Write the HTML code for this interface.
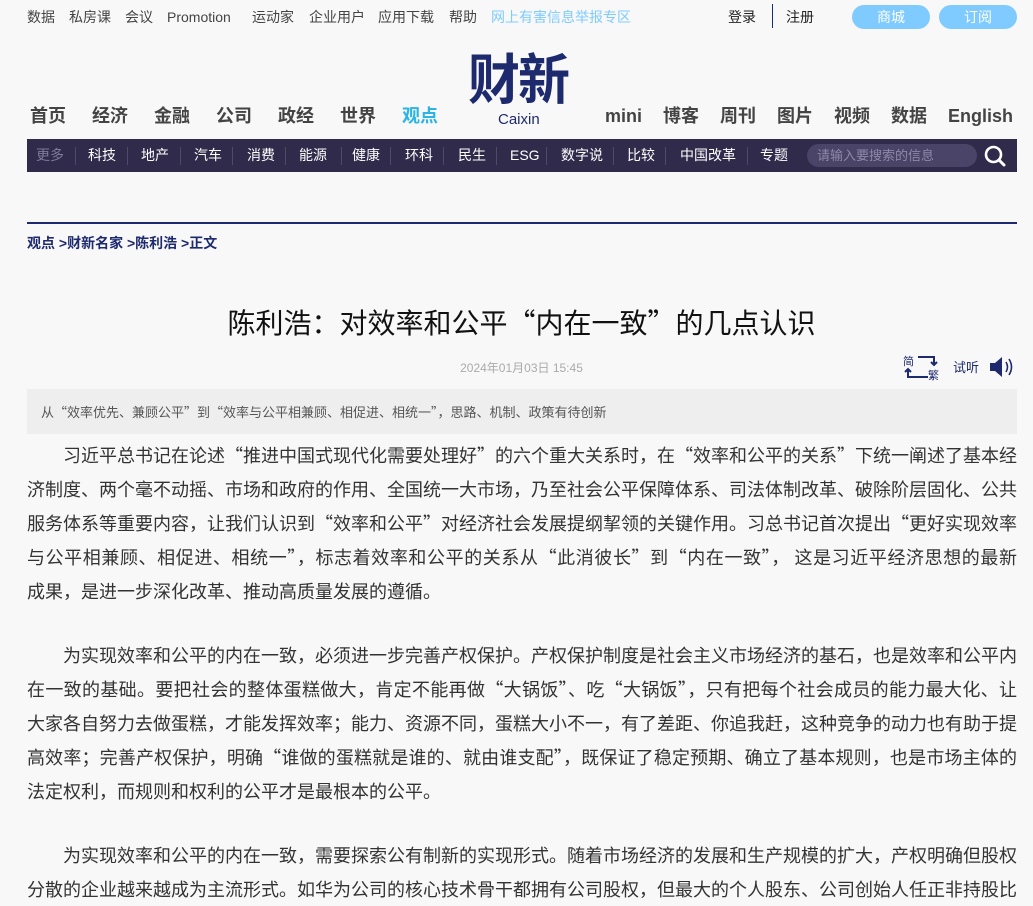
<!DOCTYPE html>
<html><head><meta charset="utf-8"><style>
*{margin:0;padding:0;box-sizing:border-box}
body{width:1033px;height:898px;overflow:hidden;background:#f8f8f8;font-family:"Liberation Sans","Noto Sans CJK SC",sans-serif;color:#333;position:relative}
.a{position:absolute;white-space:nowrap}
.top{top:7px;font-size:14px;color:#444;line-height:20px}
.pill{position:absolute;top:5px;height:24px;width:78px;border-radius:12px;background:#7fcbff;color:#fff;font-size:14px;text-align:center;line-height:24px}
.nav{top:103px;font-size:18px;font-weight:bold;color:#444;line-height:26px}
.bar{position:absolute;left:27px;top:139px;width:990px;height:33px;background:#302b4b}
.bar span{position:absolute;top:0;line-height:33px;font-size:14px;color:#fff}
.sep{position:absolute;top:8px;width:1px;height:18px;background:#4e4a68}
.ln{display:block;text-align:justify;text-align-last:justify;white-space:nowrap}
.ln.l{text-align-last:left}
.p{position:absolute;left:27px;width:990px;font-size:18px;line-height:34px;color:#333;font-family:"Noto Sans CJK SC","Liberation Sans",sans-serif}
</style></head><body>
<div class="a top" style="left:27px">数据</div>
<div class="a top" style="left:69px">私房课</div>
<div class="a top" style="left:125px">会议</div>
<div class="a top" style="left:167px">Promotion</div>
<div class="a top" style="left:252px">运动家</div>
<div class="a top" style="left:309px">企业用户</div>
<div class="a top" style="left:378px">应用下载</div>
<div class="a top" style="left:449px">帮助</div>
<div class="a top" style="left:491px;color:#7fcbff">网上有害信息举报专区</div>
<div class="a top" style="left:728px;color:#222">登录</div>
<div style="position:absolute;left:772px;top:4px;width:1px;height:24px;background:#1e2a6e"></div>
<div class="a top" style="left:786px;color:#222">注册</div>
<div class="pill" style="left:852px">商城</div>
<div class="pill" style="left:939px">订阅</div>

<div class="a" style="left:468px;top:50px;font-size:52px;font-weight:bold;color:#1e2a6e;line-height:62px;letter-spacing:-2px;transform:scaleY(1.05)">财新</div>
<div class="a" style="left:498px;top:110px;font-size:15px;color:#1e2a6e;line-height:20px">Caixin</div>

<div class="a nav" style="left:30px">首页</div>
<div class="a nav" style="left:92px">经济</div>
<div class="a nav" style="left:154px">金融</div>
<div class="a nav" style="left:216px">公司</div>
<div class="a nav" style="left:278px">政经</div>
<div class="a nav" style="left:340px">世界</div>
<div class="a nav" style="left:402px;color:#2bb5e6">观点</div>
<div class="a nav" style="left:605px">mini</div>
<div class="a nav" style="left:663px">博客</div>
<div class="a nav" style="left:720px">周刊</div>
<div class="a nav" style="left:777px">图片</div>
<div class="a nav" style="left:834px">视频</div>
<div class="a nav" style="left:891px">数据</div>
<div class="a nav" style="left:948px">English</div>

<div class="bar">
<span style="left:9px;color:#7e7a98">更多</span><i class="sep" style="left:48px"></i>
<span style="left:61px">科技</span><i class="sep" style="left:100px"></i>
<span style="left:114px">地产</span><i class="sep" style="left:153px"></i>
<span style="left:167px">汽车</span><i class="sep" style="left:205px"></i>
<span style="left:220px">消费</span><i class="sep" style="left:258px"></i>
<span style="left:272px">能源</span><i class="sep" style="left:314px"></i>
<span style="left:325px">健康</span><i class="sep" style="left:363px"></i>
<span style="left:378px">环科</span><i class="sep" style="left:416px"></i>
<span style="left:431px">民生</span><i class="sep" style="left:469px"></i>
<span style="left:483px">ESG</span><i class="sep" style="left:519px"></i>
<span style="left:534px">数字说</span><i class="sep" style="left:586px"></i>
<span style="left:600px">比较</span><i class="sep" style="left:638px"></i>
<span style="left:653px">中国改革</span><i class="sep" style="left:720px"></i>
<span style="left:733px">专题</span>
<div style="position:absolute;left:780px;top:5px;width:170px;height:23px;border-radius:12px;background:#4a4468;color:#8e89a8;font-size:13px;line-height:23px;padding-left:10px">请输入要搜索的信息</div>
<svg style="position:absolute;left:957px;top:6px" width="22" height="22" viewBox="0 0 22 22"><circle cx="9.5" cy="9.5" r="7.5" fill="none" stroke="#fff" stroke-width="2.6"/><path d="M15 15l5 5" stroke="#fff" stroke-width="3" stroke-linecap="round"/></svg>
</div>

<div style="position:absolute;left:27px;top:222px;width:990px;height:2px;background:#1e2a6e"></div>
<div class="a" style="left:27px;top:233px;font-size:14px;font-weight:bold;color:#1e2a6e;line-height:20px">观点 &gt;财新名家 &gt;陈利浩 &gt;正文</div>
<div class="a" style="left:0;width:1043px;text-align:center;top:303px;font-size:28px;color:#111;line-height:38px;font-family:'Noto Sans CJK SC',sans-serif">陈利浩：对效率和公平“内在一致”的几点认识</div>
<div class="a" style="left:0;width:1043px;text-align:center;top:360px;font-size:12px;color:#aaa;line-height:16px">2024年01月03日 15:45</div>
<svg style="position:absolute;left:902px;top:353px" width="42" height="28" viewBox="0 0 42 28"><text x="1" y="12" font-size="11" fill="#1e2a6e" font-family="Noto Sans CJK SC">简</text><text x="26" y="26" font-size="11" fill="#1e2a6e" font-family="Noto Sans CJK SC">繁</text><path d="M16 4h16v8M29 9l3 3 3-3M26 24H6v-8M3 19l3-3 3 3" fill="none" stroke="#1e2a6e" stroke-width="2"/></svg>
<div class="a" style="left:953px;top:359px;font-size:13px;color:#1e2a6e;line-height:18px">试听</div>
<svg style="position:absolute;left:988px;top:356px" width="28" height="22" viewBox="0 0 28 22"><path d="M2 7h5l7-6v20l-7-6H2z" fill="#1e2a6e"/><path d="M18 6q3 5 0 10M21 3q5 8 0 16" fill="none" stroke="#1e2a6e" stroke-width="1.6"/></svg>

<div style="position:absolute;left:27px;top:389px;width:990px;height:45px;background:#eeeeee;font-size:13px;color:#555;line-height:45px;padding-left:14px;font-family:'Noto Sans CJK SC',sans-serif">从“效率优先、兼顾公平”到“效率与公平相兼顾、相促进、相统一”，思路、机制、政策有待创新</div>

<div class="p" style="top:438px">
<span class="ln" style="padding-left:36px">习近平总书记在论述“推进中国式现代化需要处理好”的六个重大关系时，在“效率和公平的关系”下统一阐述了基本经</span>
<span class="ln">济制度、两个毫不动摇、市场和政府的作用、全国统一大市场，乃至社会公平保障体系、司法体制改革、破除阶层固化、公共</span>
<span class="ln">服务体系等重要内容，让我们认识到“效率和公平”对经济社会发展提纲挈领的关键作用。习总书记首次提出“更好实现效率</span>
<span class="ln">与公平相兼顾、相促进、相统一”，标志着效率和公平的关系从“此消彼长”到“内在一致”， 这是习近平经济思想的最新</span>
<span class="ln l">成果，是进一步深化改革、推动高质量发展的遵循。</span>
</div>
<div class="p" style="top:638px">
<span class="ln" style="padding-left:36px">为实现效率和公平的内在一致，必须进一步完善产权保护。产权保护制度是社会主义市场经济的基石，也是效率和公平内</span>
<span class="ln">在一致的基础。要把社会的整体蛋糕做大，肯定不能再做“大锅饭”、吃“大锅饭”，只有把每个社会成员的能力最大化、让</span>
<span class="ln">大家各自努力去做蛋糕，才能发挥效率；能力、资源不同，蛋糕大小不一，有了差距、你追我赶，这种竞争的动力也有助于提</span>
<span class="ln">高效率；完善产权保护，明确“谁做的蛋糕就是谁的、就由谁支配”，既保证了稳定预期、确立了基本规则，也是市场主体的</span>
<span class="ln l">法定权利，而规则和权利的公平才是最根本的公平。</span>
</div>
<div class="p" style="top:838px">
<span class="ln" style="padding-left:36px">为实现效率和公平的内在一致，需要探索公有制新的实现形式。随着市场经济的发展和生产规模的扩大，产权明确但股权</span>
<span class="ln">分散的企业越来越成为主流形式。如华为公司的核心技术骨干都拥有公司股权，但最大的个人股东、公司创始人任正非持股比</span>
</div>
</body></html>
